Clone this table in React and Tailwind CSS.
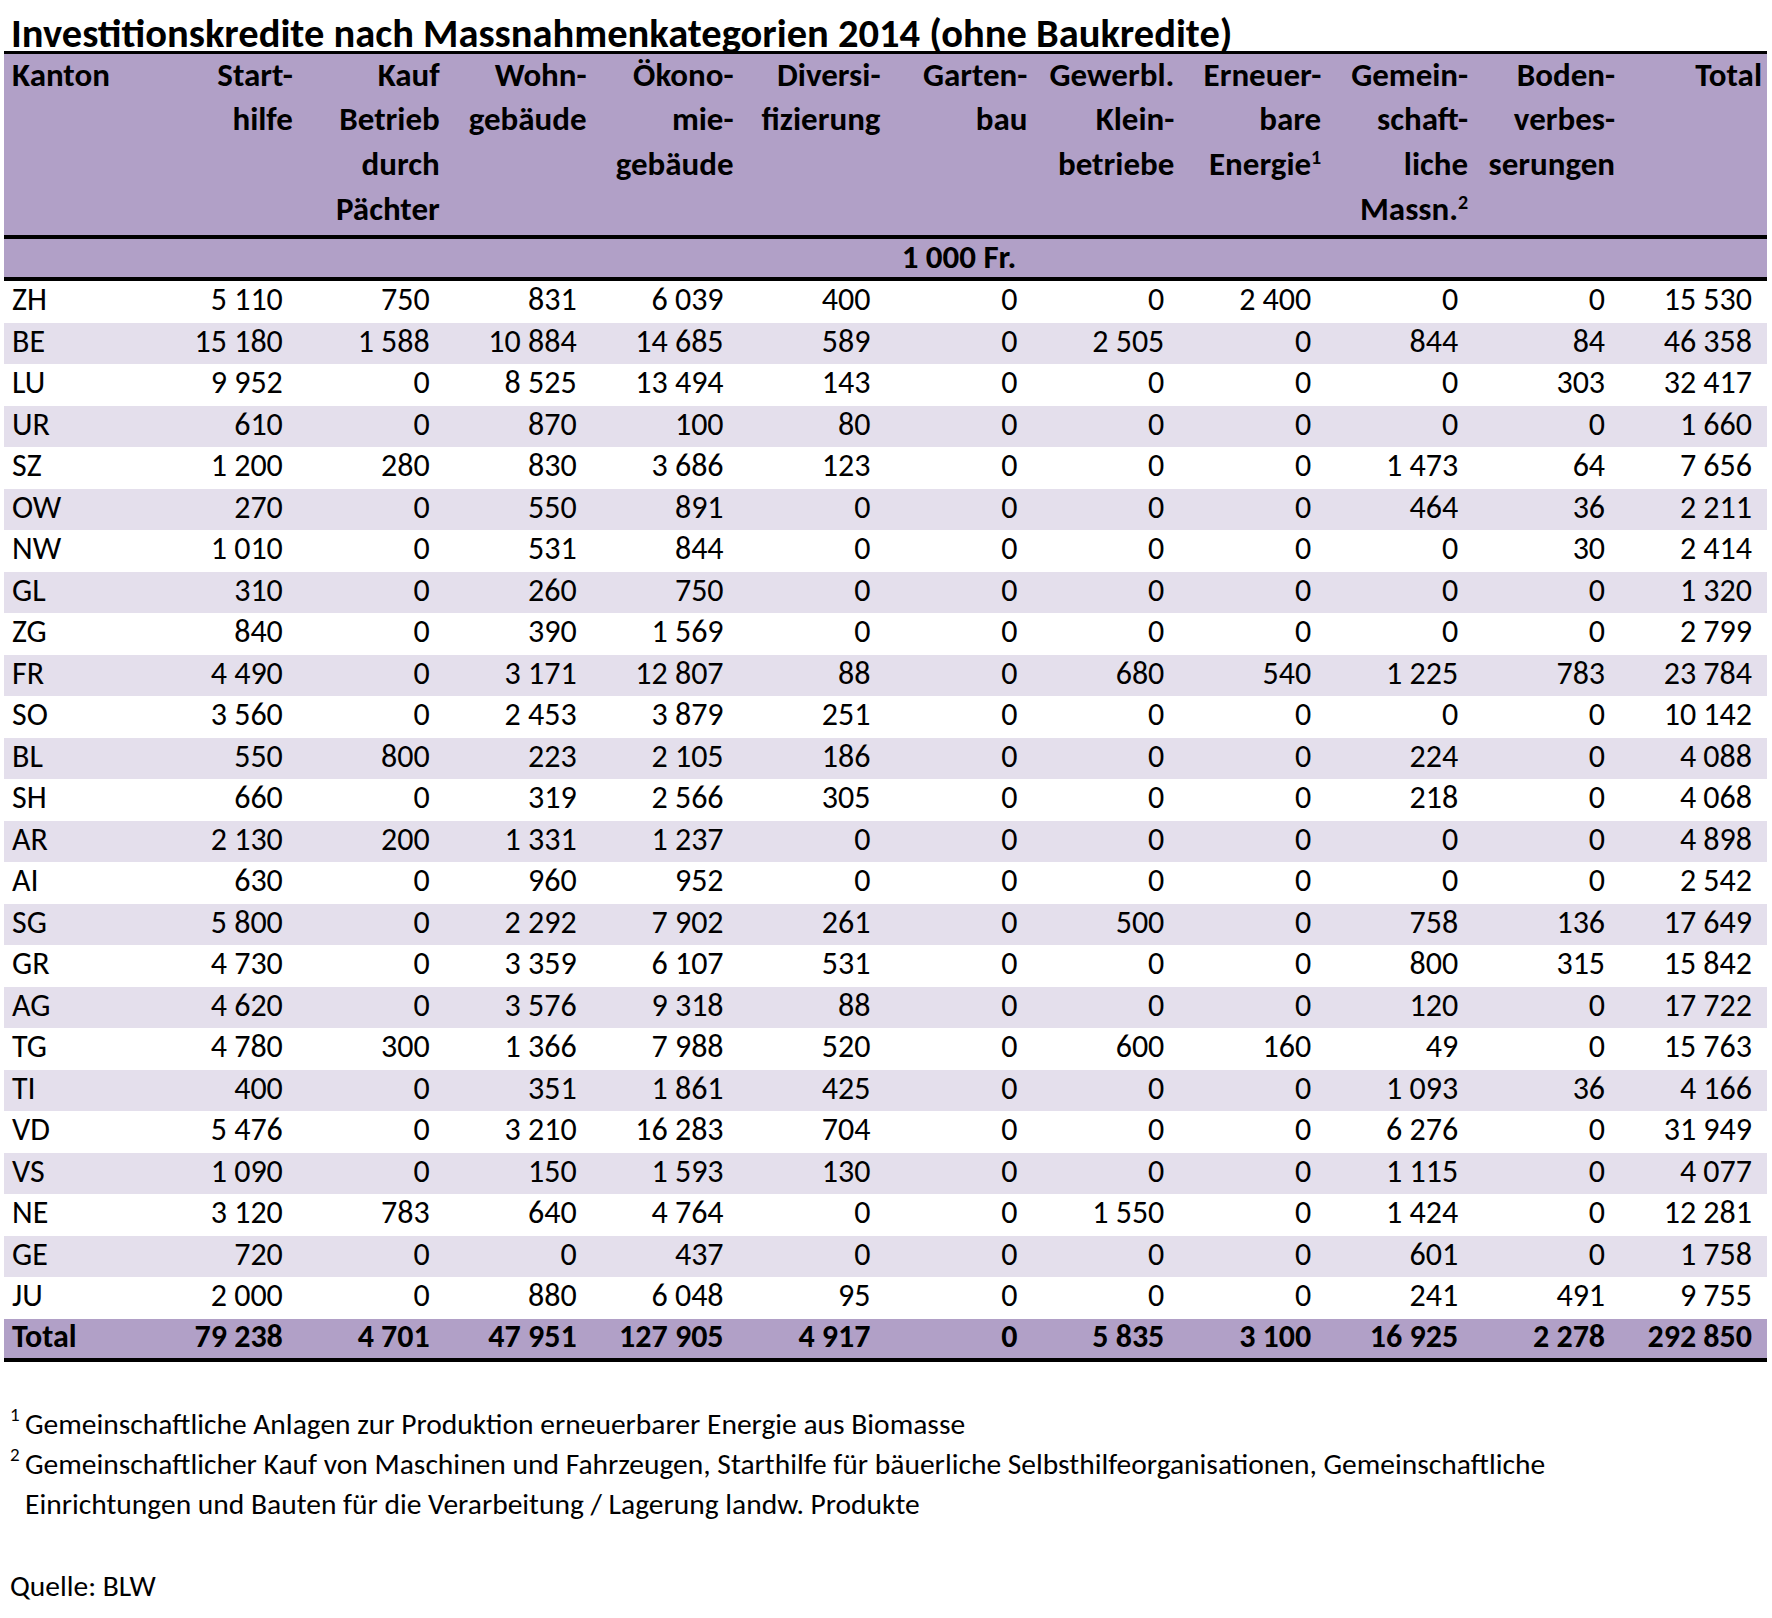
import React from "react";

const headers = [
  ["Kanton"],
  ["Start-", "hilfe"],
  ["Kauf", "Betrieb", "durch", "Pächter"],
  ["Wohn-", "gebäude"],
  ["Ökono-", "mie-", "gebäude"],
  ["Diversi-", "fizierung"],
  ["Garten-", "bau"],
  ["Gewerbl.", "Klein-", "betriebe"],
  ["Erneuer-", "bare", "Energie|1"],
  ["Gemein-", "schaft-", "liche", "Massn.|2"],
  ["Boden-", "verbes-", "serungen"],
  ["Total"],
];

const rows = [
  ["ZH", "5 110", "750", "831", "6 039", "400", "0", "0", "2 400", "0", "0", "15 530"],
  ["BE", "15 180", "1 588", "10 884", "14 685", "589", "0", "2 505", "0", "844", "84", "46 358"],
  ["LU", "9 952", "0", "8 525", "13 494", "143", "0", "0", "0", "0", "303", "32 417"],
  ["UR", "610", "0", "870", "100", "80", "0", "0", "0", "0", "0", "1 660"],
  ["SZ", "1 200", "280", "830", "3 686", "123", "0", "0", "0", "1 473", "64", "7 656"],
  ["OW", "270", "0", "550", "891", "0", "0", "0", "0", "464", "36", "2 211"],
  ["NW", "1 010", "0", "531", "844", "0", "0", "0", "0", "0", "30", "2 414"],
  ["GL", "310", "0", "260", "750", "0", "0", "0", "0", "0", "0", "1 320"],
  ["ZG", "840", "0", "390", "1 569", "0", "0", "0", "0", "0", "0", "2 799"],
  ["FR", "4 490", "0", "3 171", "12 807", "88", "0", "680", "540", "1 225", "783", "23 784"],
  ["SO", "3 560", "0", "2 453", "3 879", "251", "0", "0", "0", "0", "0", "10 142"],
  ["BL", "550", "800", "223", "2 105", "186", "0", "0", "0", "224", "0", "4 088"],
  ["SH", "660", "0", "319", "2 566", "305", "0", "0", "0", "218", "0", "4 068"],
  ["AR", "2 130", "200", "1 331", "1 237", "0", "0", "0", "0", "0", "0", "4 898"],
  ["AI", "630", "0", "960", "952", "0", "0", "0", "0", "0", "0", "2 542"],
  ["SG", "5 800", "0", "2 292", "7 902", "261", "0", "500", "0", "758", "136", "17 649"],
  ["GR", "4 730", "0", "3 359", "6 107", "531", "0", "0", "0", "800", "315", "15 842"],
  ["AG", "4 620", "0", "3 576", "9 318", "88", "0", "0", "0", "120", "0", "17 722"],
  ["TG", "4 780", "300", "1 366", "7 988", "520", "0", "600", "160", "49", "0", "15 763"],
  ["TI", "400", "0", "351", "1 861", "425", "0", "0", "0", "1 093", "36", "4 166"],
  ["VD", "5 476", "0", "3 210", "16 283", "704", "0", "0", "0", "6 276", "0", "31 949"],
  ["VS", "1 090", "0", "150", "1 593", "130", "0", "0", "0", "1 115", "0", "4 077"],
  ["NE", "3 120", "783", "640", "4 764", "0", "0", "1 550", "0", "1 424", "0", "12 281"],
  ["GE", "720", "0", "0", "437", "0", "0", "0", "0", "601", "0", "1 758"],
  ["JU", "2 000", "0", "880", "6 048", "95", "0", "0", "0", "241", "491", "9 755"],
];

const total = ["Total", "79 238", "4 701", "47 951", "127 905", "4 917", "0", "5 835", "3 100", "16 925", "2 278", "292 850"];

function HeaderLine({ text, first }) {
  const [word, note] = text.split("|");
  return (
    <div className={first ? "leading-[43px]" : ""}>
      {word}
      {note && <sup className="text-[20px] -top-[11px]">{note}</sup>}
    </div>
  );
}

function DataRow({ cells, shaded }) {
  return (
    <div
      className={`grid grid-cols-12 h-[41.5px] leading-[37.5px] whitespace-nowrap ${
        shaded ? "bg-[#e4dfec]" : "bg-white"
      }`}
    >
      {cells.map((c, i) => (
        <div key={i} className={i === 0 ? "pl-[8px] text-left" : "pr-[15px] text-right"}>
          {c}
        </div>
      ))}
    </div>
  );
}

export default function App() {
  return (
    <div className="w-[1772px] h-[1618px] bg-white text-black font-['Carlito','Calibri','Liberation_Sans',sans-serif]">
      {/* TITLE */}
      <div className="h-[51px] pl-[11px] pt-[17px] text-[40.5px] leading-[32px] font-bold whitespace-nowrap">
        Investitionskredite nach Massnahmenkategorien 2014 (ohne Baukredite)
      </div>

      <div className="ml-[4px] w-[1763px] text-[32px]">
        {/* HEADER */}
        <div className="grid grid-cols-12 h-[184px] bg-[#b1a0c7] border-t-[3px] border-black font-bold text-[33px] leading-[45px]">
          {headers.map((h, i) => (
            <div key={i} className={i === 0 ? "pl-[8px] text-left" : "pr-[5px] text-right"}>
              {h.map((line, j) => (
                <HeaderLine key={j} text={line} first={j === 0} />
              ))}
            </div>
          ))}
        </div>

        {/* UNITS */}
        <div className="grid grid-cols-12 h-[46px] bg-[#b1a0c7] border-y-[4px] border-black font-bold text-[33px] leading-[37px]">
          <div></div>
          <div className="col-span-11 text-center">1 000 Fr.</div>
        </div>

        {/* ROWS */}
        {rows.map((r, i) => (
          <DataRow key={r[0]} cells={r} shaded={i % 2 === 1} />
        ))}

        {/* TOTAL */}
        <div className="grid grid-cols-12 h-[43px] leading-[36.5px] bg-[#b1a0c7] border-b-[4px] border-black font-bold whitespace-nowrap">
          {total.map((c, i) => (
            <div key={i} className={i === 0 ? "pl-[8px] text-left" : "pr-[15px] text-right"}>
              {c}
            </div>
          ))}
        </div>
      </div>

      {/* FOOTNOTES */}
      <div className="mt-[42px] pl-[10px] text-[29.5px] leading-[40px]">
        <div className="flex items-start">
          <span className="w-[15px] mt-[1px] text-[19px] leading-none">1</span>
          <span>Gemeinschaftliche Anlagen zur Produktion erneuerbarer Energie aus Biomasse</span>
        </div>
        <div className="flex items-start">
          <span className="w-[15px] mt-[1px] text-[19px] leading-none">2</span>
          <span>
            Gemeinschaftlicher Kauf von Maschinen und Fahrzeugen, Starthilfe für bäuerliche Selbsthilfeorganisationen, Gemeinschaftliche
            <br />
            Einrichtungen und Bauten für die Verarbeitung / Lagerung landw. Produkte
          </span>
        </div>
        <div className="mt-[42px]">Quelle: BLW</div>
      </div>
    </div>
  );
}
